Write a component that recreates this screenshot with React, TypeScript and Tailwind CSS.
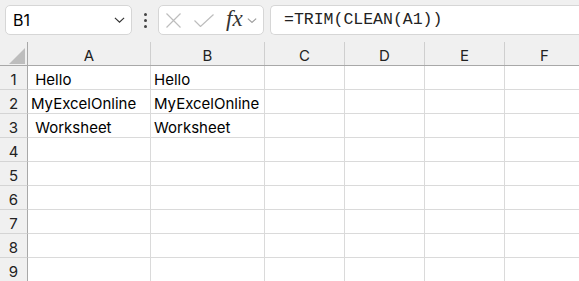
import React from 'react'

const cols = [
  { label: 'A', w: 'w-[123px]' },
  { label: 'B', w: 'w-[114px]' },
  { label: 'C', w: 'w-[80px]' },
  { label: 'D', w: 'w-[80px]' },
  { label: 'E', w: 'w-[80px]' },
  { label: 'F', w: 'w-[80px]' },
]

const data: Record<number, string[]> = {
  1: ['\u00a0Hello', 'Hello'],
  2: ['MyExcelOnline', 'MyExcelOnline'],
  3: ['\u00a0Worksheet', 'Worksheet'],
}

const Chevron = ({ className }: { className: string }) => (
  <svg viewBox="0 0 12 6" className={className} fill="none" stroke="currentColor" strokeWidth={1.3}>
    <path d="M1 0.7 L6 5.3 L11 0.7" />
  </svg>
)

const App = () => {
  return (
    <div className="w-[579px] h-[281px] overflow-hidden bg-white font-['Inter',sans-serif] text-black">
      {/* formula bar */}
      <div className="h-[42px] bg-[#f0f0f0] flex items-start pt-[5px] pl-[5px]">
        <div className="w-[127px] h-[30px] bg-white border border-[#d6d6d6] rounded-[5px] flex items-center pl-[7px] pr-[6px]">
          <span className="text-[16px] flex-1">B1</span>
          <Chevron className="w-[11px] h-[6px] text-[#333]" />
        </div>
        <div className="w-[26px] h-[30px] flex flex-col items-center justify-center gap-[3px]">
          <span className="w-[3px] h-[3px] bg-[#444] rounded-full" />
          <span className="w-[3px] h-[3px] bg-[#444] rounded-full" />
          <span className="w-[3px] h-[3px] bg-[#444] rounded-full" />
        </div>
        <div className="w-[106px] h-[30px] bg-white border border-[#d6d6d6] rounded-[5px] flex items-center pl-[7px]">
          <svg viewBox="0 0 15 15" className="w-[15px] h-[15px] text-[#bdbdbd]" fill="none" stroke="currentColor" strokeWidth={1.2}>
            <path d="M0.5 0.5 L14.5 14.5 M14.5 0.5 L0.5 14.5" />
          </svg>
          <svg viewBox="0 0 20 13" className="ml-[13px] w-[20px] h-[13px] text-[#bdbdbd]" fill="none" stroke="currentColor" strokeWidth={1.2}>
            <path d="M0.5 6.5 L6.5 12.5 L19.5 0.5" />
          </svg>
          <span className="ml-[12px] font-['Liberation_Serif',serif] italic text-[23px] leading-none text-[#333] -mt-[3px]">fx</span>
          <Chevron className="ml-[4px] w-[10px] h-[5px] text-[#999]" />
        </div>
        <div className="ml-[6px] flex-1 h-[30px] bg-white border border-r-0 border-[#d6d6d6] rounded-l-[5px] flex items-center pl-[13px]">
          <span className="font-['Liberation_Mono',monospace] text-[16.5px] text-[#222]">=TRIM(CLEAN(A1))</span>
        </div>
      </div>

      {/* column headers */}
      <div className="flex h-[24px] bg-[#f0f0f0] border-b border-[#a8a8a8]">
        <div className="w-[28px] shrink-0 border-r border-[#a8a8a8] relative">
          <svg viewBox="0 0 16 16" className="absolute left-[9px] top-[6px] w-[16px] h-[16px]">
            <path d="M16 0 L16 16 L0 16 Z" fill="#bdbdbd" />
          </svg>
        </div>
        {cols.map((c) => (
          <div key={c.label} className={`${c.w} shrink-0 border-r border-[#cfcfcf] flex items-center justify-center pt-[6px] text-[15px] text-[#222]`}>
            {c.label}
          </div>
        ))}
      </div>

      {/* rows */}
      {[1, 2, 3, 4, 5, 6, 7, 8, 9].map((r) => (
        <div key={r} className="flex h-[24px]">
          <div className="w-[28px] shrink-0 bg-[#f0f0f0] border-r border-b border-r-[#a8a8a8] border-b-[#d4d4d4] flex items-center justify-center pt-[5px] text-[15px] text-[#222]">
            {r}
          </div>
          {cols.map((c, i) => (
            <div key={c.label} className={`${c.w} shrink-0 border-r border-b border-[#dadada] flex items-center pl-[3px] pt-[5px] text-[15px] whitespace-pre overflow-hidden`}>
              {data[r]?.[i] ?? ''}
            </div>
          ))}
        </div>
      ))}
    </div>
  )
}

export default App
